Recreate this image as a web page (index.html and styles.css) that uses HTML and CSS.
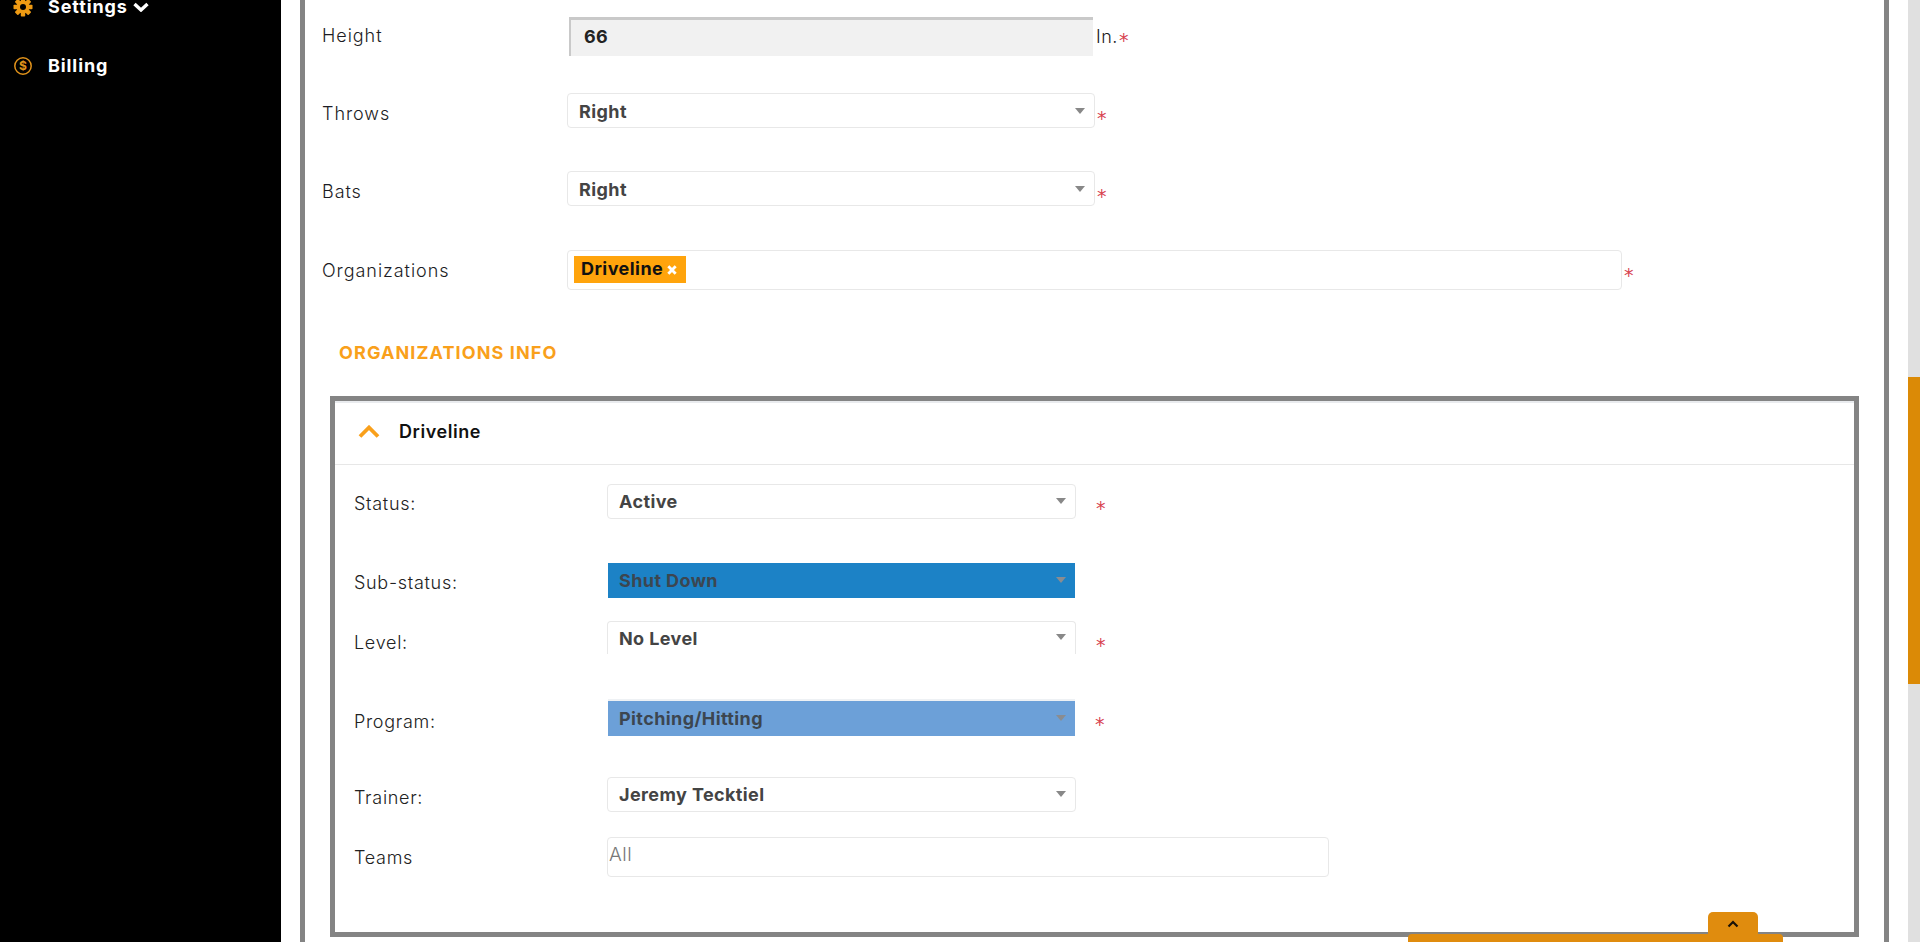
FILE: index.html
```html
<!DOCTYPE html>
<html lang="en">
<head>
<meta charset="utf-8">
<title>Athlete profile</title>
<link rel="stylesheet" href="styles.css">
</head>
<body>
<div class="app">
  <aside class="sidebar">
    <ul class="nav">
      <li class="nav-item">
        <svg class="nav-icon" viewBox="0 0 20 20"><g fill="#ee9a13"><circle cx="10" cy="10" r="6.500"/><rect x="7.800" y="0.500" width="4.400" height="19" rx=".8"/><rect x="7.800" y="0.500" width="4.400" height="19" rx=".8" transform="rotate(45 10 10)"/><rect x="7.800" y="0.500" width="4.400" height="19" rx=".8" transform="rotate(90 10 10)"/><rect x="7.800" y="0.500" width="4.400" height="19" rx=".8" transform="rotate(135 10 10)"/></g><circle cx="10" cy="10" r="3" fill="#000"/></svg>
        <span>Settings</span>
        <svg class="nav-caret" viewBox="0 0 16 10"><path d="M1.500 2l6.500 6 6.500-6" fill="none" stroke="#fff" stroke-width="3.400"/></svg>
      </li>
      <li class="nav-item">
        <svg class="nav-icon" viewBox="0 0 20 20"><circle cx="10" cy="10" r="8.200" fill="none" stroke="#e0921a" stroke-width="1.500"/><text x="10" y="14" class="dollar">$</text></svg>
        <span>Billing</span>
      </li>
    </ul>
  </aside>

  <main class="main">
    <div class="frame">
      <div class="row row-height">
        <label class="label label-up">Height</label>
        <div class="input-readonly">66</div>
        <span class="unit">In.</span>
        <span class="req req-unit">*</span>
      </div>
      <div class="row row-throws">
        <label class="label label-low">Throws</label>
        <div class="select"><span>Right</span><i class="arrow"></i></div>
        <span class="req">*</span>
      </div>
      <div class="row row-bats">
        <label class="label label-low">Bats</label>
        <div class="select"><span>Right</span><i class="arrow"></i></div>
        <span class="req">*</span>
      </div>
      <div class="row row-orgs">
        <label class="label">Organizations</label>
        <div class="multi">
          <span class="tag">Driveline<svg class="tag-x" viewBox="0 0 9 9"><path d="M1.200 1.200l6.600 6.600M7.800 1.200L1.200 7.800" stroke="#fff" stroke-width="2.600"/></svg></span>
        </div>
        <span class="req req-orgs">*</span>
      </div>

      <h2 class="section-title">ORGANIZATIONS INFO</h2>

      <section class="panel">
        <header class="panel-head">
          <svg class="chev" viewBox="0 0 22 13"><path d="M2 11.500l9-9 9 9" fill="none" stroke="#f9a01b" stroke-width="3.800"/></svg>
          <h3 class="panel-title">Driveline</h3>
        </header>
        <div class="panel-body">
          <div class="prow prow-status">
            <label class="plabel lift-3">Status:</label>
            <div class="select pselect"><span>Active</span><i class="arrow"></i></div>
            <span class="req preq">*</span>
          </div>
          <div class="prow prow-sub">
            <label class="plabel lift-3">Sub-status:</label>
            <div class="select pselect bar bar-dark"><span>Shut Down</span><i class="arrow"></i></div>
          </div>
          <div class="prow prow-level">
            <label class="plabel lift-8">Level:</label>
            <div class="select pselect clipped"><span>No Level</span><i class="arrow"></i></div>
            <span class="req preq preq-level">*</span>
          </div>
          <div class="prow prow-program">
            <label class="plabel lift-5">Program:</label>
            <div class="select pselect bar bar-light"><span>Pitching/Hitting</span><i class="arrow"></i></div>
            <span class="req preq preq-program">*</span>
          </div>
          <div class="prow prow-trainer">
            <label class="plabel lift-5">Trainer:</label>
            <div class="select pselect"><span>Jeremy Tecktiel</span><i class="arrow"></i></div>
          </div>
          <div class="prow prow-teams">
            <label class="plabel">Teams</label>
            <div class="teams">All</div>
          </div>
        </div>
      </section>
    </div>
  </main>

  <div class="scrollbar"><div class="thumb"></div></div>
</div>

<div class="drawer">
  <button class="drawer-tab" type="button"><svg viewBox="0 0 12 8"><path d="M1.500 6.500L6 2l4.500 4.500" fill="none" stroke="#1a1208" stroke-width="2.200"/></svg></button>
</div>
</body>
</html>
```
FILE: styles.css
```css
* { box-sizing: border-box; }
html, body { margin: 0; height: 100%; overflow: hidden; background: #fff; }
body { font-family: Inter, "Liberation Sans", sans-serif; color: #333; }

.app { display: grid; grid-template-columns: 281px 1fr 12px; height: 942px; overflow: hidden; }

/* sidebar */
.sidebar { background: #000; overflow: hidden; }
.nav { list-style: none; margin: -23px 0 0; padding: 0; }
.nav-item { display: flex; align-items: center; height: 59px; padding-left: 13px; color: #fff; font-size: 18px; letter-spacing: .9px; font-weight: 700; }
.nav-icon { width: 20px; height: 20px; margin-right: 15px; flex: none; overflow: visible; }
.nav-caret { width: 16px; height: 10px; margin-left: 5px; }
.dollar { font-size: 12px; font-weight: 700; letter-spacing: 0; fill: #e0921a; text-anchor: middle; }

/* main */
.main { padding-left: 19px; padding-right: 19px; min-width: 0; }
.frame { border-left: 5px solid #848484; border-right: 5px solid #848484; height: 942px; padding: 17px 25px 0 17px; }

.row { display: flex; align-items: center; }
.row-height { height: 39px; margin-bottom: 37px; }
.row-throws { height: 35px; margin-bottom: 43px; }
.row-bats { height: 35px; margin-bottom: 44px; }
.row-orgs { height: 40px; margin-bottom: 52px; }
.row .select { padding-top: 2px; }

.label { width: 245px; flex: none; font-size: 18px; letter-spacing: .95px; font-weight: 300; color: #1c1c24; }
.label-low { padding-top: 5px; }
.label-up { padding-bottom: 2px; }

.input-readonly { width: 524px; height: 39px; margin-left: 2px; padding: 0 0 4px 13px; display: flex; align-items: center; background: #f1f1f1; border-top: 3px solid #c9c9c9; border-left: 2px solid #c9c9c9; font-size: 18px; letter-spacing: .4px; font-weight: 700; color: #222; }
.unit { margin-left: 3px; font-size: 18px; letter-spacing: .5px; font-weight: 300; color: #1c1c24; }

.select { width: 528px; height: 35px; display: flex; align-items: center; justify-content: space-between; padding: 0 9px 0 11px; border: 1px solid #e8e8e8; border-radius: 4px; font-size: 18px; letter-spacing: .4px; font-weight: 700; color: #444; background: #fff; }
.arrow { width: 0; height: 0; border-left: 5px solid transparent; border-right: 5px solid transparent; border-top: 6px solid #888; margin-top: -2px; flex: none; }

.req { font-family: "DejaVu Sans", sans-serif; font-size: 19px; font-weight: 400; color: #d8434f; margin: 16px 0 0 2px; line-height: 1; }
.req-unit { margin: 7px 0 0 1px; }
.req-orgs { margin-top: 10px; }

.multi { width: 1055px; height: 40px; border: 1px solid #e8e8e8; border-radius: 4px; padding: 5px 6px; }
.tag { display: inline-flex; align-items: center; height: 27px; width: 112px; padding: 0 0 2px 7px; background: #ffa40c; color: #111; font-size: 18px; letter-spacing: .45px; font-weight: 700; }
.tag-x { width: 10px; height: 10px; margin: 2px 0 0 4px; }

.section-title { margin: 0 0 32px 17px; height: 22px; line-height: 22px; color: #f9a01b; font-size: 18px; letter-spacing: 1.100px; font-weight: 700; }

/* panel */
.panel { margin-left: 8px; height: 541px; border: 5px solid #848484; box-shadow: inset 0 2px 0 #e9ebee; }
.panel-head { display: flex; align-items: center; height: 64px; padding: 0 0 2px 23px; border-bottom: 1px solid #e7e7e7; }
.chev { width: 22px; height: 13px; margin-right: 19px; }
.panel-title { margin: 0; font-size: 18px; letter-spacing: .55px; font-weight: 600; color: #111; }
.panel-body { padding: 19px 0 0 19px; }

.prow { display: flex; align-items: center; }
.prow-status { height: 35px; margin-bottom: 44px; }
.prow-sub { height: 35px; margin-bottom: 23px; }
.prow-level { height: 34px; margin-bottom: 46px; }
.prow-program { height: 35px; margin-bottom: 41px; }
.prow-trainer { height: 35px; margin-bottom: 25px; }
.prow-teams { height: 40px; }

.plabel { width: 253px; flex: none; font-size: 18px; letter-spacing: .7px; font-weight: 300; color: #222; }
.lift-3 { padding-top: 3px; }
.lift-5 { padding-top: 5px; }
.lift-8 { padding-top: 8px; }

.pselect { width: 469px; }
.preq { margin: 13px 0 0 20px; }
.preq-level { margin-top: 14px; }
.preq-program { margin-top: 11px; }

.clipped { border-bottom: 0; border-radius: 4px 4px 0 0; height: 33px; margin-bottom: 1px; }
.bar { border: 0; border-radius: 0; margin-left: 1px; width: 467px; padding-left: 11px; }
.bar .arrow { border-top-color: #8a8c90; }
.bar span { color: #3c4650; }
.bar-dark { background: #1c82c6; }
.bar-light { background: #6ca0d8; box-shadow: 0 -2px 0 #eef1f4; }

.teams { width: 722px; height: 40px; border: 1px solid #e8e8e8; border-radius: 4px; padding: 5px 0 0 1px; font-size: 19px; letter-spacing: .5px; font-weight: 300; color: #777; }

/* scrollbar */
.scrollbar { position: relative; background: #e0e0e0; }
.thumb { position: absolute; left: 0; right: 0; top: 377px; height: 307px; background: #db8a06; }

/* bottom drawer */
.drawer { position: absolute; left: 1408px; top: 934px; width: 375px; height: 8px; background: #e08c0e; border-radius: 4px 4px 0 0; }
.drawer-tab { position: absolute; left: 300px; top: -22px; width: 50px; height: 23px; padding: 0; border: 0; background: #e08c0e; border-radius: 5px 5px 0 0; display: flex; align-items: center; justify-content: center; }
.drawer-tab svg { width: 12px; height: 8px; }
```
